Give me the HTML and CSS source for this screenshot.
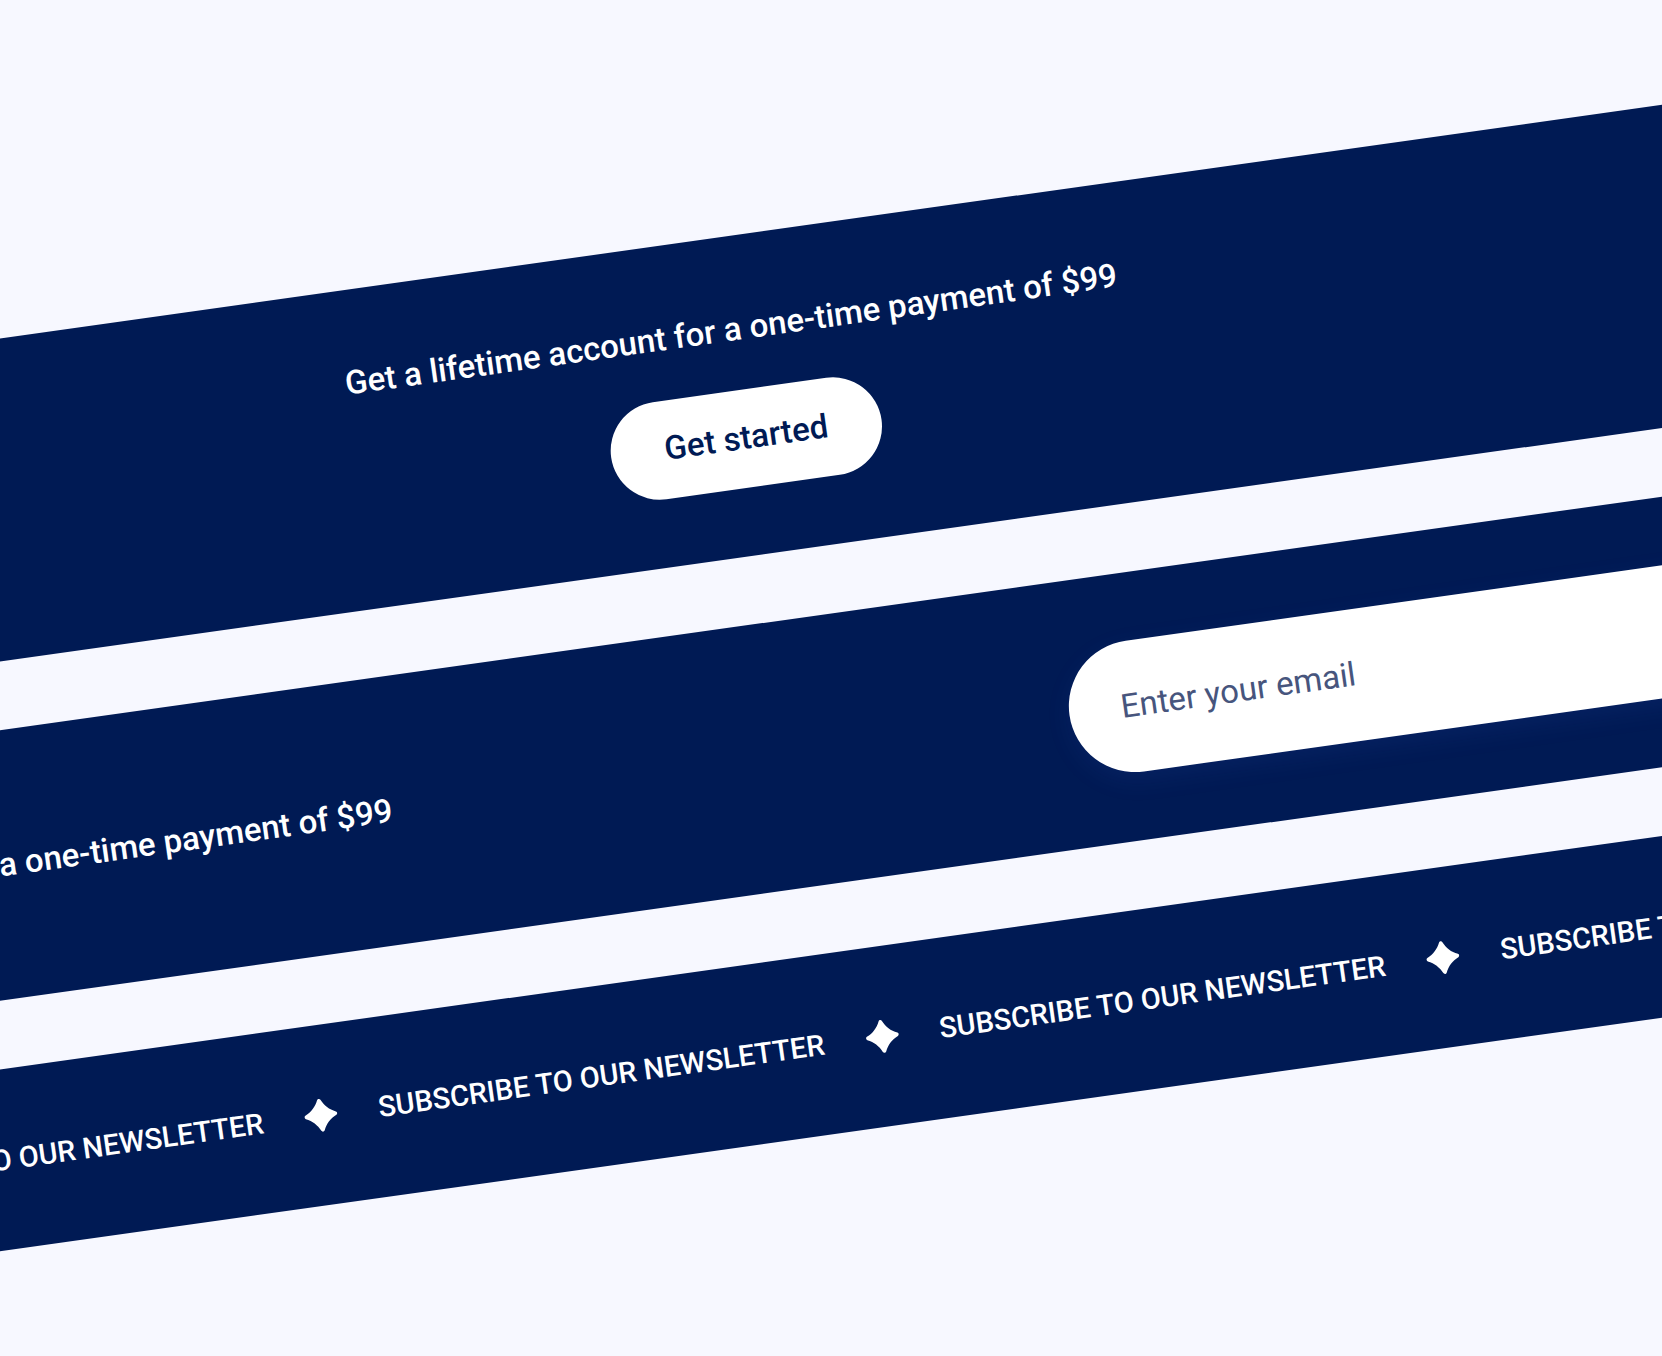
FILE: index.html
```html
<!DOCTYPE html>
<html lang="en">
<head>
  <meta charset="UTF-8">
  <meta name="viewport" content="width=device-width, initial-scale=1.0">
  <title>Lifetime account</title>
  <link rel="stylesheet" href="styles.css">
</head>
<body>

<svg class="sprite" aria-hidden="true">
  <symbol id="star" viewBox="0 0 34 34">
    <path d="M15.3 1.6C16 .2 18 .2 18.7 1.6C21.6 8 26 12.4 32.4 15.3C33.8 16 33.8 18 32.4 18.7C26 21.6 21.6 26 18.7 32.4C18 33.8 16 33.8 15.3 32.4C12.4 26 8 21.6 1.6 18.7C.2 18 .2 16 1.6 15.3C8 12.4 12.4 8 15.3 1.6Z"/>
  </symbol>
</svg>

<main class="stage">
  <section class="banner banner-stacked">
    <p class="offer">Get a lifetime account for a one-time payment of $99</p>
    <button type="button" class="btn">Get started</button>
  </section>

  <form class="banner banner-row">
    <label class="offer" for="email">Get a lifetime account for a one-time payment of $99</label>
    <input class="email" type="email" id="email" placeholder="Enter your email">
  </form>

  <section class="banner marquee">
    <span>SUBSCRIBE TO OUR NEWSLETTER</span>
    <svg class="star"><use href="#star"/></svg>
    <span>SUBSCRIBE TO OUR NEWSLETTER</span>
    <svg class="star"><use href="#star"/></svg>
    <span>SUBSCRIBE TO OUR NEWSLETTER</span>
    <svg class="star"><use href="#star"/></svg>
    <span>SUBSCRIBE TO OUR NEWSLETTER</span>
  </section>
</main>

</body>
</html>
```

FILE: styles.css
```css
* {
  box-sizing: border-box;
}
body {
  margin: 0;
  min-height: 100vh;
  display: flex;
  justify-content: center;
  align-items: center;
  overflow: hidden;
  background: #f7f8ff;
  color: #001a54;
  font-family: Roboto, 'Liberation Sans', sans-serif;
}
.sprite {
  display: none;
}

/* tilted stack, wider than the window so the ends never show */
.stage {
  flex: none;
  width: 150%;
  display: flex;
  flex-direction: column;
  gap: 68px;
  transform: rotate(-8deg);
}
.banner {
  display: flex;
  justify-content: center;
  align-items: center;
  padding: 68px 0;
  background: #001a54;
  color: #fff;
}
.banner-stacked {
  flex-direction: column;
  gap: 36px;
  padding-right: 102px;
}
.banner-row {
  gap: 684px;
  padding-right: 102px;
}
.offer {
  flex: none;
  margin: 0;
  font-size: 33px;
  font-weight: 500;
  line-height: 50px;
  white-space: nowrap;
}

.btn {
  height: 98px;
  padding: 0 54px 4px;
  border: none;
  border-radius: 49px;
  background: #fff;
  color: #001a54;
  font-family: inherit;
  font-size: 33px;
  font-weight: 500;
  cursor: pointer;
}
.email {
  flex: none;
  width: 900px;
  height: 132px;
  padding: 0 52px 4px;
  border: none;
  border-radius: 66px;
  background: #fff;
  color: #001a54;
  font-family: inherit;
  font-size: 33px;
  box-shadow: 0 8px 24px rgba(50, 90, 200, 0.12);
}
.email::placeholder {
  color: #47557d;
}

.marquee {
  gap: 41px;
  font-size: 29px;
  font-weight: 500;
  line-height: 44px;
  white-space: nowrap;
}
.star {
  flex: none;
  width: 34px;
  height: 34px;
  fill: #fff;
}
```
